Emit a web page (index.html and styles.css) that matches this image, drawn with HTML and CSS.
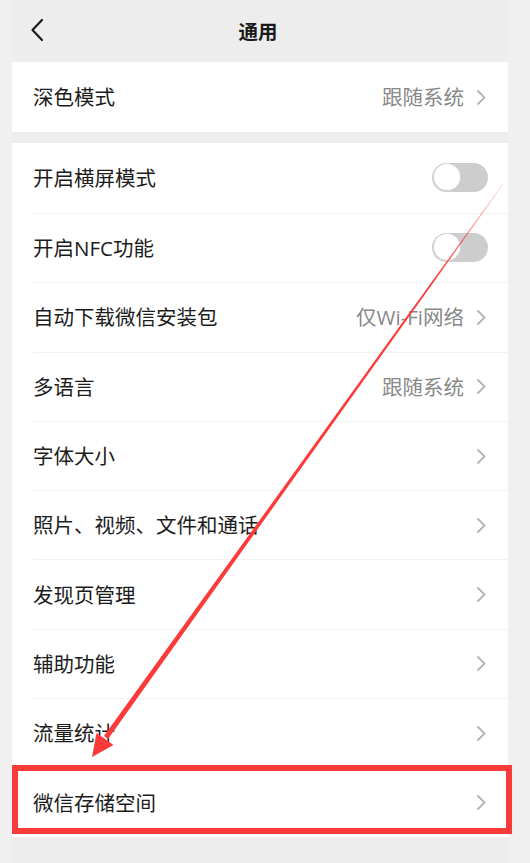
FILE: index.html
```html
<!DOCTYPE html>
<html lang="zh-CN">
<head>
<meta charset="utf-8">
<title>通用</title>
<link rel="stylesheet" href="styles.css">
</head>
<body>
<div class="screen">
  <header class="topbar">
    <span class="back">
      <svg width="14" height="24" viewBox="0 0 14 24"><path d="M12 2 L2.5 12 L12 22" fill="none" stroke="#1c1c1c" stroke-width="2.2" stroke-linecap="round" stroke-linejoin="round"/></svg>
    </span>
    <h1 class="title">通用</h1>
    <span class="back-spacer"></span>
  </header>

  <section class="card">
    <div class="row"><div class="row-inner first">
      <span class="label">深色模式</span>
      <span class="value">跟随系统</span>
      <span class="chev"><svg width="10" height="17" viewBox="0 0 10 17"><path d="M1.5 1.5 L8.5 8.5 L1.5 15.5" fill="none" stroke="#b4b4b4" stroke-width="1.8"/></svg></span>
    </div></div>
  </section>

  <section class="card card-main">
    <div class="row"><div class="row-inner first">
      <span class="label">开启横屏模式</span>
      <span class="switch"><span class="knob"></span></span>
    </div></div>
    <div class="row"><div class="row-inner">
      <span class="label">开启NFC功能</span>
      <span class="switch"><span class="knob"></span></span>
    </div></div>
    <div class="row"><div class="row-inner">
      <span class="label">自动下载微信安装包</span>
      <span class="value">仅Wi-Fi网络</span>
      <span class="chev"><svg width="10" height="17" viewBox="0 0 10 17"><path d="M1.5 1.5 L8.5 8.5 L1.5 15.5" fill="none" stroke="#b4b4b4" stroke-width="1.8"/></svg></span>
    </div></div>
    <div class="row"><div class="row-inner">
      <span class="label">多语言</span>
      <span class="value">跟随系统</span>
      <span class="chev"><svg width="10" height="17" viewBox="0 0 10 17"><path d="M1.5 1.5 L8.5 8.5 L1.5 15.5" fill="none" stroke="#b4b4b4" stroke-width="1.8"/></svg></span>
    </div></div>
    <div class="row"><div class="row-inner">
      <span class="label">字体大小</span>
      <span class="chev"><svg width="10" height="17" viewBox="0 0 10 17"><path d="M1.5 1.5 L8.5 8.5 L1.5 15.5" fill="none" stroke="#b4b4b4" stroke-width="1.8"/></svg></span>
    </div></div>
    <div class="row"><div class="row-inner">
      <span class="label">照片、视频、文件和通话</span>
      <span class="chev"><svg width="10" height="17" viewBox="0 0 10 17"><path d="M1.5 1.5 L8.5 8.5 L1.5 15.5" fill="none" stroke="#b4b4b4" stroke-width="1.8"/></svg></span>
    </div></div>
    <div class="row"><div class="row-inner">
      <span class="label">发现页管理</span>
      <span class="chev"><svg width="10" height="17" viewBox="0 0 10 17"><path d="M1.5 1.5 L8.5 8.5 L1.5 15.5" fill="none" stroke="#b4b4b4" stroke-width="1.8"/></svg></span>
    </div></div>
    <div class="row"><div class="row-inner">
      <span class="label">辅助功能</span>
      <span class="chev"><svg width="10" height="17" viewBox="0 0 10 17"><path d="M1.5 1.5 L8.5 8.5 L1.5 15.5" fill="none" stroke="#b4b4b4" stroke-width="1.8"/></svg></span>
    </div></div>
    <div class="row"><div class="row-inner">
      <span class="label">流量统计</span>
      <span class="chev"><svg width="10" height="17" viewBox="0 0 10 17"><path d="M1.5 1.5 L8.5 8.5 L1.5 15.5" fill="none" stroke="#b4b4b4" stroke-width="1.8"/></svg></span>
    </div></div>
    <div class="row"><div class="row-inner">
      <span class="label">微信存储空间</span>
      <span class="chev"><svg width="10" height="17" viewBox="0 0 10 17"><path d="M1.5 1.5 L8.5 8.5 L1.5 15.5" fill="none" stroke="#b4b4b4" stroke-width="1.8"/></svg></span>
    </div></div>
  </section>
</div>

<div class="highlight-box"></div>
<svg class="annot-arrow" width="530" height="863" viewBox="0 0 530 863">
  <defs>
    <linearGradient id="fade" gradientUnits="userSpaceOnUse" x1="503" y1="184" x2="104" y2="739">
      <stop offset="0" stop-color="#fb3a3a" stop-opacity="0.15"/>
      <stop offset="0.18" stop-color="#fb3a3a" stop-opacity="1"/>
      <stop offset="1" stop-color="#fb3a3a" stop-opacity="1"/>
    </linearGradient>
  </defs>
  <polygon points="503.4,184.3 502.6,183.7 103.9,736 108.1,739" fill="url(#fade)"/>
  <polygon points="92,757 96.5,733 113.5,745" fill="#fb3a3a"/>
</svg>
</body>
</html>
```

FILE: styles.css
```css
html, body {
  margin: 0;
  padding: 0;
}
body {
  width: 530px;
  height: 863px;
  background: #f0f0f0;
  font-family: "Open Sans", "Noto Sans CJK SC", sans-serif;
  overflow: hidden;
  position: relative;
}
.screen {
  margin-left: 12px;
  width: 496px;
  height: 863px;
  background: #ededed;
}
.topbar {
  height: 62px;
  display: flex;
  align-items: center;
  justify-content: space-between;
  padding: 0 18px;
  box-sizing: border-box;
}
.back {
  width: 40px;
  display: flex;
  align-items: center;
  margin-top: -2px;
}
.back-spacer {
  width: 40px;
}
.title {
  margin: 0;
  font-size: 19.5px;
  font-weight: 600;
  color: #1a1a1a;
  margin-top: -2px;
  margin-right: 4px;
}
.card {
  background: #ffffff;
}
.card-main {
  margin-top: 11px;
}
.row {
  padding-left: 21px;
}
.row-inner {
  height: 69.3px;
  box-sizing: border-box;
  border-top: 1px solid #f1f1f1;
  display: flex;
  align-items: center;
  padding-right: 22px;
}
.row-inner.first {
  border-top: none;
  height: 70px;
}
.label {
  flex: 1;
  font-size: 20.5px;
  color: #1c1c1c;
  margin-top: -2px;
}
.value {
  font-size: 20.5px;
  color: #888888;
  margin-right: 12px;
  margin-top: -2px;
}
.chev {
  display: flex;
  align-items: center;
  width: 10px;
}
.switch {
  width: 56px;
  height: 29px;
  border-radius: 15px;
  background: #cdcdcd;
  display: flex;
  align-items: center;
  padding-left: 1.5px;
  box-sizing: border-box;
  margin-right: -2px;
  margin-top: -2px;
}
.knob {
  width: 26px;
  height: 26px;
  border-radius: 50%;
  background: #ffffff;
  box-shadow: 0 0 0 1px #d6d6d6;
}
.highlight-box {
  position: absolute;
  left: 11.5px;
  top: 765px;
  width: 500px;
  height: 69px;
  box-sizing: border-box;
  border: 6.5px solid #fb3a3a;
}
.annot-arrow {
  position: absolute;
  left: 0;
  top: 0;
  pointer-events: none;
}
```
